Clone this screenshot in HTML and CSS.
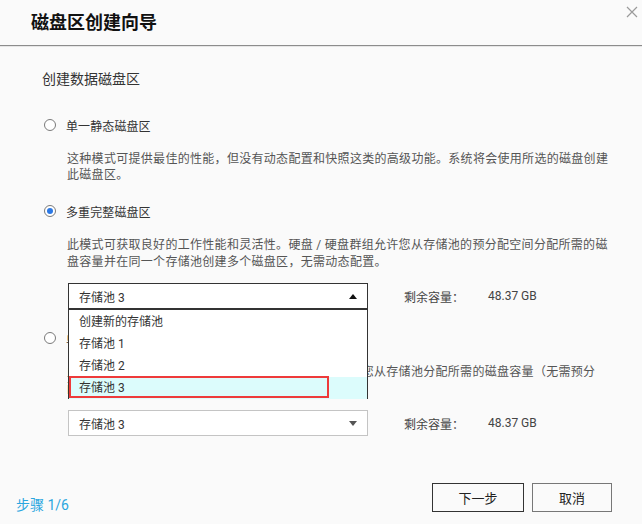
FILE: index.html
```html
<!DOCTYPE html>
<html lang="zh-CN">
<head>
<meta charset="utf-8">
<title>磁盘区创建向导</title>
<link rel="stylesheet" href="styles.css">
</head>
<body>
<div class="dialog">
  <div class="header">
    <div class="title">磁盘区创建向导</div>
    <svg class="close" width="12" height="12" viewBox="0 0 12 12"><path d="M1 1L11 11M11 1L1 11" stroke="#9a9a9a" stroke-width="1.2" fill="none"/></svg>
  </div>
  <div class="main">
    <div class="subtitle">创建数据磁盘区</div>

    <div class="option"><span class="radio"></span><span class="label">单一静态磁盘区</span></div>
    <div class="desc">这种模式可提供最佳的性能，但没有动态配置和快照这类的高级功能。系统将会使用所选的磁盘创建<br>此磁盘区。</div>

    <div class="option opt2"><span class="radio checked"></span><span class="label">多重完整磁盘区</span></div>
    <div class="desc desc2">此模式可获取良好的工作性能和灵活性。硬盘 / 硬盘群组允许您从存储池的预分配空间分配所需的磁<br>盘容量并在同一个存储池创建多个磁盘区，无需动态配置。</div>

    <div class="pool-row">
      <div class="select open">
        <span class="select-text">存储池 3</span>
        <span class="arrow up"></span>
        <div class="dropdown">
          <div class="item">创建新的存储池</div>
          <div class="item">存储池 1</div>
          <div class="item">存储池 2</div>
          <div class="item selected">存储池 3</div>
          <div class="mark"></div>
        </div>
      </div>
      <span class="cap-label">剩余容量：</span>
      <span class="cap-value">48.37 GB</span>
    </div>

    <div class="option opt3"><span class="radio"></span><span class="label">单一精简磁盘区</span></div>
    <div class="desc desc2">此模式可获取更灵活的存储空间。硬盘 / 硬盘群组允许您从存储池分配所需的磁盘容量（无需预分<br>配空间），并可使用快照功能。</div>

    <div class="pool-row row2">
      <div class="select">
        <span class="select-text">存储池 3</span>
        <span class="arrow down"></span>
      </div>
      <span class="cap-label">剩余容量：</span>
      <span class="cap-value">48.37 GB</span>
    </div>
  </div>
  <div class="footer">
    <span class="step">步骤 1/6</span>
    <div class="buttons">
      <button class="btn next">下一步</button>
      <button class="btn cancel">取消</button>
    </div>
  </div>
</div>
</body>
</html>
```
FILE: styles.css
```css
html, body {
  margin: 0;
  padding: 0;
  background: #fafafa;
}
body {
  width: 642px;
  height: 524px;
  overflow: hidden;
  font-family: Roboto, "Noto Sans CJK SC", sans-serif;
  color: #333;
}
.dialog {
  display: flex;
  flex-direction: column;
  height: 524px;
}
.header {
  position: relative;
  height: 45px;
  border-bottom: 1px solid #8c8c8c;
  box-shadow: 0 1px 0 #e6e6e6;
  display: flex;
  align-items: center;
  padding-left: 31px;
}
.title {
  font-size: 18px;
  font-weight: bold;
  color: #111;
  line-height: 20px;
  margin-top: 1px;
}
.close {
  position: absolute;
  left: 626px;
  top: 6px;
}
.main {
  padding-left: 42px;
  flex: 1;
}
.subtitle {
  margin-top: 23px;
  font-size: 14px;
  line-height: 20px;
  color: #333;
}
.option {
  display: flex;
  align-items: center;
  height: 20px;
  margin-top: 26px;
}
.opt2 { margin-top: 18px; }
.opt3 { margin-top: 19px; }
.radio {
  box-sizing: border-box;
  width: 12px;
  height: 12px;
  border: 1px solid #7a7a7a;
  border-radius: 50%;
  background: #fff;
  margin-left: 2px;
  margin-right: 10px;
  display: flex;
  align-items: center;
  justify-content: center;
}
.radio.checked::after {
  content: "";
  width: 6px;
  height: 6px;
  border-radius: 50%;
  background: #2b78e4;
}
.label {
  font-size: 12px;
  letter-spacing: 0.1px;
  color: #333;
}
.desc {
  margin-top: 16px;
  margin-left: 25px;
  font-size: 12px;
  letter-spacing: 0.3px;
  line-height: 16px;
  color: #555;
  white-space: nowrap;
}
.desc2 { line-height: 17px; }
.pool-row {
  display: flex;
  align-items: center;
  margin-top: 12px;
  margin-left: 26px;
  height: 26px;
}
.row2 { margin-top: 12px; }
.select {
  position: relative;
  box-sizing: border-box;
  width: 300px;
  height: 26px;
  border: 1px solid #c4c4c4;
  background: #fff;
  display: flex;
  align-items: center;
  padding-left: 10px;
}
.select.open {
  border-color: #333;
  z-index: 2;
}
.select-text {
  font-size: 12px;
  color: #333;
  flex: 1;
}
.arrow {
  width: 0;
  height: 0;
  margin-right: 10px;
  border-left: 4px solid transparent;
  border-right: 4px solid transparent;
}
.arrow.up { border-bottom: 5px solid #111; }
.arrow.down { border-top: 5px solid #555; }
.dropdown {
  position: absolute;
  left: -1px;
  top: 25px;
  box-sizing: border-box;
  width: 300px;
  height: 90px;
  border: 1px solid #333;
  background: #fff;
  padding-top: 1px;
}
.item {
  height: 22px;
  line-height: 22px;
  padding-left: 10px;
  font-size: 12px;
  color: #333;
}
.item.selected {
  background: #dcfcfc;
}
.mark {
  position: absolute;
  left: 0;
  top: 66px;
  width: 260px;
  height: 22px;
  box-sizing: border-box;
  border: 2px solid #ee3b3b;
}
.cap-label {
  margin-left: 36px;
  font-size: 12px;
  color: #444;
  width: 84px;
}
.cap-value {
  font-size: 12px;
  color: #444;
}
.footer {
  display: flex;
  align-items: flex-end;
  justify-content: space-between;
  padding: 0 30px 12px 16px;
}
.step {
  font-size: 14px;
  color: #2aa6df;
  line-height: 16px;
  margin-bottom: -1px;
}
.buttons {
  display: flex;
  gap: 8px;
}
.btn {
  box-sizing: border-box;
  height: 29px;
  background: #fafafa;
  font-family: Roboto, "Noto Sans CJK SC", sans-serif;
  font-size: 13px;
  color: #222;
  padding: 0;
  border-radius: 0;
}
.btn.next {
  width: 92px;
  border: 1px solid #333;
}
.btn.cancel {
  width: 80px;
  border: 1px solid #777;
}
```
